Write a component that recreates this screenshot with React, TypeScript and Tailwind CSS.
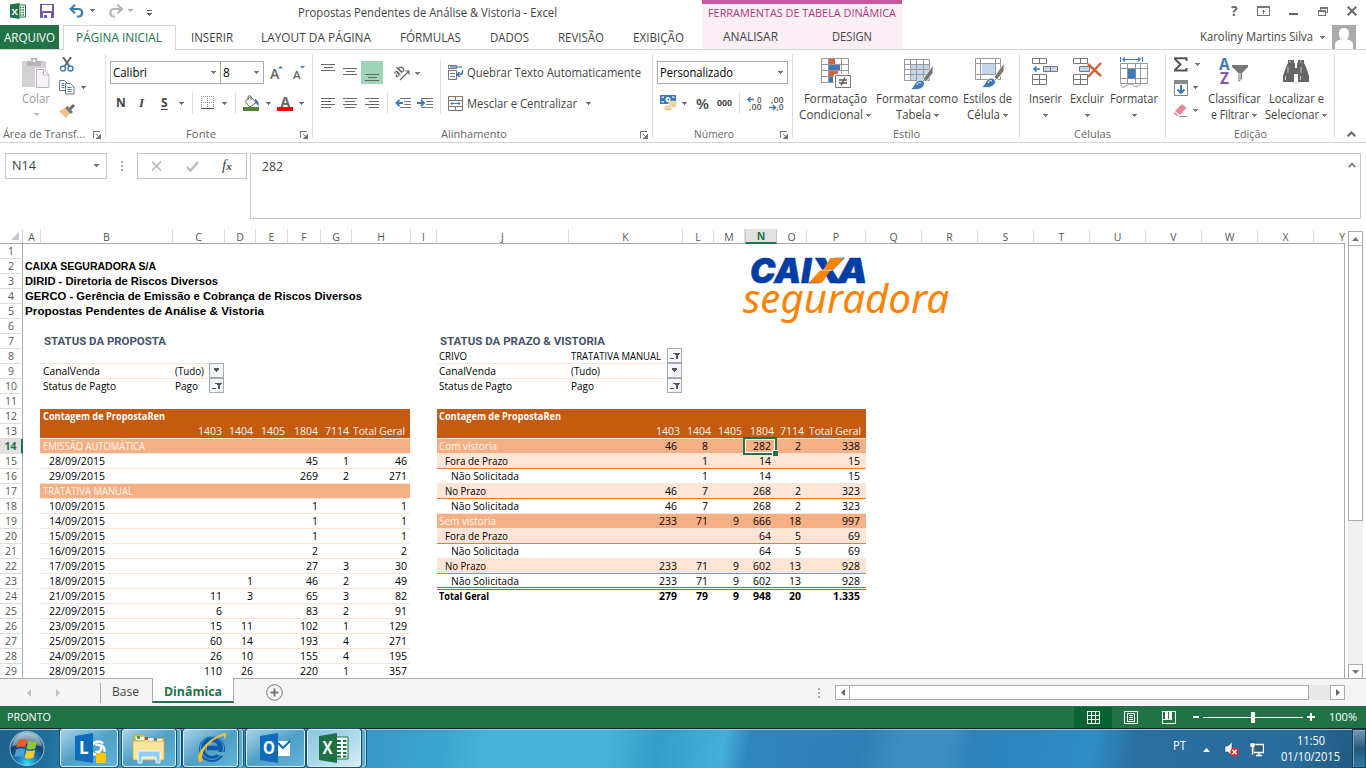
import React, { useLayoutEffect, useRef } from "react";

/* Text squeezed or stretched horizontally to a given width. */
function T({ w, c = "", children }: { w: number; c?: string; children: string }) {
  const ref = useRef<HTMLSpanElement>(null);
  useLayoutEffect(() => {
    const el = ref.current;
    if (!el) return;
    el.style.transform = "none";
    const natural = el.getBoundingClientRect().width;
    if (natural > 0) el.style.transform = `scaleX(${w / natural})`;
  }, [w, children]);
  return (
    <span className={`inline-flex shrink-0 whitespace-nowrap ${c}`} style={{ width: w }}>
      <span ref={ref} className="inline-block origin-left">
        {children}
      </span>
    </span>
  );
}

function Arrow({ c = "" }: { c?: string }) {
  return (
    <svg viewBox="0 0 5 3" className={`h-[3px] w-[5px] shrink-0 ${c}`} shapeRendering="crispEdges">
      <path d="M0 0h5v1h-1v1h-1v1h-1v-1h-1v-1h-1z" fill="#777" />
    </svg>
  );
}

function Launcher() {
  return (
    <svg viewBox="0 0 8 8" className="mr-[4px] mt-[1px] ml-auto h-[8px] w-[8px]" shapeRendering="crispEdges" fill="none" stroke="#777">
      <path d="M.5 7V.5H7" />
      <path d="M7.5 3v4.5H3" />
      <path d="M3 3h1v1H3zM4 4h1v1H4zM4 6h3v1H4zM6 4h1v3H6zM5 5h1v1H5z" fill="#777" stroke="none" />
    </svg>
  );
}

function Lines({ l, w = 14, h = 14, c = "" }: { l: number[][]; w?: number; h?: number; c?: string }) {
  return (
    <svg width={w} height={h} viewBox={`0 0 ${w} ${h}`} className={`shrink-0 ${c}`} shapeRendering="crispEdges">
      {l.map(([x, y, n], i) => (
        <rect key={i} x={x} y={y} width={n} height="1" fill="#666" />
      ))}
    </svg>
  );
}

function Vr({ c = "" }: { c?: string }) {
  return <div className={`w-px shrink-0 self-stretch bg-[#dcdcdc] ${c}`} />;
}

function Group({ c, label, lw, left, launcher, children }: { c: string; label: string; lw: number; left?: string; launcher?: boolean; children: React.ReactNode }) {
  return (
    <div className={`mt-[4px] flex h-[84px] shrink-0 flex-col border-r border-[#dcdcdc] ${c}`}>
      <div className="h-[60px] shrink-0">{children}</div>
      <div className={`mt-[8px] flex h-[24px] shrink-0 items-center text-[11px] text-[#666] ${left ? "" : "justify-center"}`}>
        <T w={lw} c={left ?? ""}>{label}</T>
        {launcher && <Launcher />}
      </div>
    </div>
  );
}

function Big({ c, icon, a, aw, b, bw }: { c: string; icon: React.ReactNode; a: string; aw: number; b?: string; bw?: number }) {
  return (
    <div className={`flex shrink-0 flex-col items-center pt-[3px] ${c}`}>
      <div className="flex h-[32px] items-start">{icon}</div>
      <div className="mt-[2px] flex h-[16px] items-center"><T w={aw}>{a}</T></div>
      <div className="flex h-[16px] items-center gap-[3px]">
        {b && <T w={bw ?? 0}>{b}</T>}
        <Arrow />
      </div>
    </div>
  );
}

function ExcelMini() {
  return (
    <svg viewBox="0 0 16 16" className="h-[16px] w-[16px]">
      <path d="M8 2h7.5v12H8z" fill="#fff" stroke="#217346" />
      <path d="M10 4.5h1.5M12.5 4.5H14M10 7h1.5M12.5 7H14M10 9.500h1.500M12.500 9.500H14M10 12h1.500M12.500 12H14" stroke="#217346" strokeWidth="1.300" />
      <path d="M0 1.500L9.500 0v16L0 14.500z" fill="#217346" />
      <text x="1.600" y="11.500" fontSize="9.500" fontWeight="700" fill="#fff" fontFamily="Open Sans, sans-serif">X</text>
    </svg>
  );
}

function Header() {
  const tab = "text-[12px]";
  return (
    <div className="flex h-[50px] shrink-0">
      <div className="flex w-[702px] flex-col">
        <div className="flex h-[25px] items-center">
          <div className="ml-[10px] -mt-[4px]"><ExcelMini /></div>
          <svg viewBox="0 0 14 14" className="ml-[14px] -mt-[3px] h-[14px] w-[14px]" shapeRendering="crispEdges">
            <path d="M0 0h14v14H0z" fill="#7c54a5" />
            <path d="M2 1h10v6H2zM3 9h8v5H3z" fill="#fff" />
            <path d="M4 11h3v3H4z" fill="#7c54a5" />
          </svg>
          <svg viewBox="0 0 16 14" className="-mt-[4px] ml-[15px] h-[14px] w-[16px]" fill="none" stroke="#3f7ab8" strokeWidth="2.200">
            <path d="M1.500 5H10a3.800 3.800 0 0 1 0 7.500H8" /><path d="M6 .8L1.500 5 6 9.200" />
          </svg>
          <Arrow c="ml-[5px] -mt-[4px]" />
          <svg viewBox="0 0 16 14" className="-mt-[4px] ml-[13px] h-[14px] w-[16px]" fill="none" stroke="#b5b5b5" strokeWidth="2.200">
            <path d="M14 5H5.500a3.800 3.800 0 0 0 0 7.500H7" /><path d="M9.500 .8L14 5 9.500 9.200" />
          </svg>
          <Arrow c="ml-[4px] -mt-[4px] opacity-60" />
          <svg viewBox="0 0 6 6" className="ml-[14px] h-[6px] w-[6px]" shapeRendering="crispEdges">
            <path d="M0 0h5v1H0zM0 3h5v1h-1v1h-1v1h-1v-1h-1v-1h-1z" fill="#666" />
          </svg>
          <T w={259} c="ml-[145px] mt-[1px] text-[12px] text-[#444]">Propostas Pendentes de Análise & Vistoria - Excel</T>
        </div>
        <div className={`flex h-[25px] items-stretch ${tab}`}>
          <div className="flex w-[59px] items-center border-b border-[#d4d4d4] bg-[#217346] pl-[4px] pt-[1px] text-white"><T w={51}>ARQUIVO</T></div>
          <div className="w-[4px] border-b border-[#d4d4d4]" />
          <div className="flex w-[113px] items-center border-x border-t border-[#d4d4d4] pl-[12px] text-[#217346]"><T w={86}>PÁGINA INICIAL</T></div>
          <div className="flex flex-1 items-center border-b border-[#d4d4d4] pt-[2px] text-[#444]">
            <T w={42} c="ml-[15px]">INSERIR</T>
            <T w={110} c="ml-[28px]">LAYOUT DA PÁGINA</T>
            <T w={61} c="ml-[29px]">FÓRMULAS</T>
            <T w={39} c="ml-[29px]">DADOS</T>
            <T w={46} c="ml-[29px]">REVISÃO</T>
            <T w={51} c="ml-[29px]">EXIBIÇÃO</T>
          </div>
        </div>
      </div>
      <div className="flex w-[200px] flex-col border-b border-t-4 border-b-[#d4d4d4] border-t-[#c9589d] bg-[#fbeff6]">
        <div className="flex h-[18px] items-center pl-[6px] text-[11.500px] text-[#a8397c]"><T w={188}>FERRAMENTAS DE TABELA DINÂMICA</T></div>
        <div className="mt-[4px] flex h-[24px] items-center text-[12px] text-[#444]">
          <T w={55} c="ml-[21px]">ANALISAR</T>
          <T w={40} c="ml-[54px]">DESIGN</T>
        </div>
      </div>
      <div className="flex flex-1 flex-col border-b border-[#d4d4d4]">
        <div className="flex h-[25px] items-center text-[#666]">
          <span className="-mt-[3px] ml-[329px] w-[8px] text-[14px] font-bold leading-none">?</span>
          <svg viewBox="0 0 13 10" className="-mt-[3px] ml-[18px] h-[10px] w-[13px]" shapeRendering="crispEdges" fill="none" stroke="#777">
            <path d="M.5.500h12v9H.5zM0 1.500h13M6.500 4v4M5 5.500h3M6 4.500h1" />
          </svg>
          <div className="ml-[19px] mt-[2px] h-[2px] w-[9px] bg-[#666]" />
          <svg viewBox="0 0 10 9" className="-mt-[3px] ml-[20px] h-[9px] w-[10px]" shapeRendering="crispEdges" fill="none" stroke="#777">
            <path d="M2.500 2.500v-2h7v5h-2M.5 3.500h7v5h-7zM2 1.500h8M0 4.500h8" />
          </svg>
          <svg viewBox="0 0 10 10" className="-mt-[3px] ml-[19px] h-[10px] w-[10px]" stroke="#666" strokeWidth="2"><path d="M.7.700l8.600 8.600M9.300.700L.7 9.300" /></svg>
        </div>
        <div className="flex h-[24px] items-center text-[12px] text-[#444]">
          <T w={113} c="ml-[298px]">Karoliny Martins Silva</T>
          <Arrow c="ml-[7px]" />
          <svg viewBox="0 0 24 24" className="ml-[7px] h-[24px] w-[24px]">
            <path d="M0 0h24v24H0z" fill="#ababab" />
            <path d="M3 24v-4c0-4 3-5 6-5.500C7 12.500 7 10 7 8c0-3 2-5 5-5s5 2 5 5c0 2-.5 4.500-2 6.500 3 .5 6 1.500 6 5.500v4z" fill="#fff" />
          </svg>
        </div>
      </div>
    </div>
  );
}

const Brush = ({ x = 0 }: { x?: number }) => (
  <g transform={`translate(${x} 0)`}>
    <path d="M29 6L19 20l3 3 7-9z" fill="#777" stroke="#fff" strokeWidth=".8" />
    <path d="M6 30c4 0 4-8 10-9 4 0 6 4 3 7-3 3-9 3-13 2z" fill="#3f7ab8" stroke="#fff" strokeWidth=".8" />
    <path d="M13 26a3 3 0 0 1 4-2" stroke="#fff" fill="none" />
  </g>
);

function Ribbon() {
  return (
    <div className="flex h-[93px] shrink-0 border-b border-[#d4d4d4] text-[12px] text-[#444]">
      <Group c="w-[106px]" label="Área de Transf..." lw={82} left="ml-[3px]" launcher>
        <div className="flex">
          <div className="flex w-[57px] flex-col items-center pl-[15px] pt-[4px] text-[#999]">
            <svg viewBox="0 0 28 30" className="h-[30px] w-[28px]">
              <path d="M0 3h24v26H0z" fill="#d5d0d5" />
              <path d="M5 8V3h4V0h6v3h4v5z" fill="#b9b4ba" /><path d="M11 1.500h2V4h-2z" fill="#fff" />
              <path d="M13 10h9l6 6v14H13z" fill="#fff" />
              <path d="M14.500 11.500h7l5.500 5.500v12.500H14.500zM21.500 11.500V17H27" fill="#f6f4f8" stroke="#b9b4ba" />
            </svg>
            <div className="mt-[3px] flex h-[16px] items-center"><T w={28}>Colar</T></div>
            <Arrow c="mt-[6px] opacity-50" />
          </div>
          <div className="-mt-px flex flex-col pl-[2px]">
            <div className="flex h-[23px] items-center">
              <svg viewBox="0 0 16 15" className="h-[15px] w-[16px]" fill="none">
                <path d="M4 0l6.500 9.500M12 0L5.500 9.500" stroke="#666" strokeWidth="2" />
                <circle cx="4" cy="11.500" r="2.500" stroke="#3f7ab8" strokeWidth="1.400" /><circle cx="11.500" cy="11.500" r="2.500" stroke="#3f7ab8" strokeWidth="1.400" />
              </svg>
            </div>
            <div className="flex h-[23px] items-center">
              <svg viewBox="0 0 16 15" className="h-[15px] w-[16px]" fill="#fff" stroke="#777">
                <path d="M.5.500h5l3 3V10.500H.5z" /><path d="M2.500 3.500h3M2.500 5.500h3M2.500 7.500h3" stroke="#3f7ab8" />
                <path d="M6.500 3.500h5l3.500 3.500V14H6.500z" /><path d="M8.500 7.500h4M8.500 9.500h4M8.500 11.500h4" stroke="#3f7ab8" />
              </svg>
              <Arrow c="ml-[6px]" />
            </div>
            <div className="flex h-[23px] items-center">
              <svg viewBox="0 0 16 14" className="h-[14px] w-[16px]">
                <path d="M0 7l6-3 5 5-4 5z" fill="#eec587" /><path d="M6 4l2.500-2L14 8l-2.500 2z" fill="#777" /><path d="M10 4l4-4 2 2-4 4z" fill="#666" />
              </svg>
            </div>
          </div>
        </div>
      </Group>

      <Group c="w-[207px]" label="Fonte" lw={30} launcher left="ml-[80px]">
        <div className="flex h-[38px] items-center">
          <div className="-mt-[1px] ml-[4px] flex h-[23px] w-[111px] items-center justify-between border border-[#ababab] pl-[2px] pr-[4px] text-black"><T w={34}>Calibri</T><Arrow /></div>
          <div className="-mt-[1px] -ml-px flex h-[23px] w-[44px] items-center justify-between border border-[#ababab] pl-[2px] pr-[4px] text-black"><span>8</span><Arrow /></div>
          <svg viewBox="0 0 14 16" className="ml-[6px] h-[16px] w-[14px] overflow-visible">
            <text x="0" y="13.500" fontSize="14" fontWeight="600" fill="#666" fontFamily="Open Sans, sans-serif" textLength="9.500">A</text>
            <path d="M8 3.500L10.500 1 13 3.500z" fill="#3f7ab8" />
          </svg>
          <svg viewBox="0 0 14 16" className="ml-[9px] h-[16px] w-[14px] overflow-visible">
            <text x="0" y="13.500" fontSize="11.500" fontWeight="600" fill="#666" fontFamily="Open Sans, sans-serif" textLength="7.500">A</text>
            <path d="M7 1h5L9.500 3.500z" fill="#3f7ab8" />
          </svg>
        </div>
        <div className="flex h-[22px] items-center">
          <span className="ml-[10px] w-[9px] font-bold">N</span>
          <span className="ml-[14px] w-[6px] font-[Liberation_Serif] text-[13px] font-bold italic">I</span>
          <span className="ml-[16px] w-[8px] font-bold underline underline-offset-2">S</span>
          <Arrow c="ml-[10px]" /><Vr c="ml-[8px]" />
          <svg viewBox="0 0 13 14" className="ml-[8px] h-[14px] w-[13px]" shapeRendering="crispEdges">
            <path d="M0 .5h13M0 6.500h13M.5 0v13M6.500 0v13M12.500 0v13" stroke="#888" strokeDasharray="1 1" /><path d="M0 12h13v1H0z" fill="#555" />
          </svg>
          <Arrow c="ml-[8px]" /><Vr c="ml-[8px]" />
          <svg viewBox="0 0 16 16" className="ml-[7px] h-[16px] w-[16px]">
            <path d="M7.500 1.500l5.500 6-6 4.500-5-5.500z" fill="#fff" stroke="#666" /><path d="M5 5V1.500Q6.500-.5 8 1.500V5" fill="none" stroke="#666" />
            <path d="M12 4c3 1 4 4 3.500 7.500C14 9 13 8 12 8z" fill="#3f7ab8" /><path d="M0 12h16v4H0z" fill="#548235" />
          </svg>
          <Arrow c="ml-[7px]" />
          <svg viewBox="0 0 16 16" className="ml-[6px] h-[16px] w-[16px] overflow-visible">
            <text x="3.500" y="11.500" fontSize="14" fontWeight="700" fill="#666" fontFamily="Open Sans, sans-serif">A</text><path d="M0 12h16v4H0z" fill="#f00" />
          </svg>
          <Arrow c="ml-[6px]" />
        </div>
      </Group>

      <Group c="w-[340px]" label="Alinhamento" lw={66} launcher left="ml-[128px]">
        <div className="flex">
          <div className="w-[127px]">
            <div className="flex h-[38px] items-center">
              <Lines c="ml-[8px]" h={20} l={[[0, 1, 14], [3, 4, 9], [0, 7, 14]]} />
              <Lines c="ml-[8px]" h={20} l={[[0, 5, 14], [3, 8, 9], [0, 11, 14]]} />
              <div className="-mt-[1px] ml-[4px] flex h-[23px] w-[22px] items-center justify-center bg-[#9fd5b7]"><Lines h={20} l={[[0, 11, 14], [3, 14, 9], [0, 17, 14]]} /></div>
              <svg viewBox="0 0 17 16" className="ml-[11px] h-[16px] w-[17px] overflow-visible">
                <text transform="translate(3.500 9.500) rotate(-45)" x="-3" y="2" fontSize="10.500" fontWeight="600" fill="#555" fontFamily="Open Sans, sans-serif">ab</text>
                <path d="M6 15l8.500-8.500M11.500 6H15v3.500" fill="none" stroke="#666" strokeWidth="1.200" />
              </svg>
              <Arrow c="ml-[4px]" />
            </div>
            <div className="flex h-[22px] items-center">
              <Lines c="ml-[8px]" h={12} l={[[0, 1, 14], [0, 4, 10], [0, 7, 14], [0, 10, 10]]} />
              <Lines c="ml-[8px]" h={12} l={[[0, 1, 14], [2, 4, 10], [0, 7, 14], [2, 10, 10]]} />
              <Lines c="ml-[8px]" h={12} l={[[0, 1, 14], [4, 4, 10], [0, 7, 14], [4, 10, 10]]} />
              <Vr c="ml-[8px]" />
              <svg viewBox="0 0 17 12" className="ml-[7px] h-[12px] w-[17px]">
                <path d="M5 1.500h11M9 4.500h7M9 7.500h7M5 10.500h11" stroke="#777" /><path d="M8 6H2M4.500 3L1.500 6l3 3" fill="none" stroke="#3f7ab8" strokeWidth="1.800" />
              </svg>
              <svg viewBox="0 0 17 12" className="ml-[5px] h-[12px] w-[17px]">
                <path d="M4 1.500h12M9 4.500h7M9 7.500h7M4 10.500h12" stroke="#777" /><path d="M0 6h6M4 3l3 3-3 3" fill="none" stroke="#3f7ab8" strokeWidth="1.800" />
              </svg>
            </div>
          </div>
          <Vr c="mt-[6px]" />
          <div>
            <div className="flex h-[38px] items-center">
              <svg viewBox="0 0 16 15" className="-mt-[2px] ml-[7px] h-[15px] w-[16px]" fill="none">
                <path d="M.5.500h8v3h-8zM.5 5.500h8v9h-8zM2 8.500h5M2 11.500h5" stroke="#777" />
                <path d="M2 2h12" stroke="#3f7ab8" strokeWidth="1.200" /><path d="M14.500 5v2q0 2.500-3 2.500H9M11.500 7L9 9.500l2.500 2.500" stroke="#3f7ab8" strokeWidth="1.500" />
              </svg>
              <T w={174} c="ml-[3px]">Quebrar Texto Automaticamente</T>
            </div>
            <div className="flex h-[22px] items-center">
              <svg viewBox="0 0 16 15" className="ml-[7px] h-[15px] w-[16px]" fill="none">
                <path d="M.5.500h14v14H.5zM0 4.500h15M0 10.500h15M7.500 0v4M7.500 11v4" stroke="#777" /><path d="M3 7.500h9M4.500 6L3 7.500 4.500 9M10.500 6L12 7.500 10.500 9" stroke="#3f7ab8" />
              </svg>
              <T w={110} c="ml-[3px] mt-[1px]">Mesclar e Centralizar</T>
              <Arrow c="ml-[9px]" />
            </div>
          </div>
        </div>
      </Group>

      <Group c="w-[140px]" label="Número" lw={40} launcher left="ml-[41px]">
        <div className="flex h-[38px] items-center">
          <div className="-mt-[1px] ml-[4px] flex h-[23px] w-[131px] items-center justify-between border border-[#ababab] pl-[2px] pr-[4px] text-black"><T w={73}>Personalizado</T><Arrow /></div>
        </div>
        <div className="flex h-[22px] items-center">
          <svg viewBox="0 0 17 16" className="ml-[7px] h-[16px] w-[17px]">
            <path d="M0 0h16v9H0z" fill="#3f7ab8" /><path d="M2 3V2h2M12 2h2v1M2 6v1h2" stroke="#fff" fill="none" /><circle cx="8" cy="4.500" r="2.500" fill="#fff" /><circle cx="8.500" cy="4.500" r="1" fill="#3f7ab8" />
            <ellipse cx="12.500" cy="8" rx="4" ry="2" fill="#eec587" stroke="#fff" strokeWidth=".6" /><ellipse cx="12.500" cy="10.500" rx="4" ry="2" fill="#eec587" stroke="#fff" strokeWidth=".6" />
            <ellipse cx="8" cy="12" rx="4" ry="2" fill="#eec587" stroke="#fff" strokeWidth=".6" /><ellipse cx="8" cy="14" rx="4" ry="1.800" fill="#eec587" stroke="#fff" strokeWidth=".6" />
          </svg>
          <Arrow c="ml-[5px]" />
          <T w={13} c="ml-[9px] text-[14px] font-semibold">%</T>
          <T w={15} c="ml-[8px] mt-[-1px] text-[9px] font-bold">000</T>
          <Vr c="ml-[7px]" />
          <svg viewBox="0 0 16 15" className="ml-[7px] h-[15px] w-[16px] overflow-visible" fontFamily="Open Sans, sans-serif" fontSize="9" fontWeight="600" fill="#555">
            <path d="M7 3.500H1M3.500 1L1 3.500 3.500 6" stroke="#3f7ab8" strokeWidth="1.500" fill="none" />
            <text x="10" y="6.500" textLength="4.500" lengthAdjust="spacingAndGlyphs">0</text><text x="2" y="14" textLength="12.500" lengthAdjust="spacingAndGlyphs">,00</text>
          </svg>
          <svg viewBox="0 0 16 15" className="ml-[6px] h-[15px] w-[16px] overflow-visible" fontFamily="Open Sans, sans-serif" fontSize="9" fontWeight="600" fill="#555">
            <text x="2" y="6.500" textLength="12.500" lengthAdjust="spacingAndGlyphs">,00</text><text x="7.500" y="14" textLength="7" lengthAdjust="spacingAndGlyphs">,0</text>
            <path d="M0 11.500h6M4 9l2.500 2.500L4 14" stroke="#3f7ab8" strokeWidth="1.500" fill="none" />
          </svg>
        </div>
      </Group>

      <Group c="w-[227px]" label="Estilo" lw={27}>
        <div className="flex">
          <Big c="w-[84px]" a="Formatação" aw={63} b="Condicional" bw={64} icon={
            <svg viewBox="0 0 30 31" className="ml-[2px] mt-[1px] h-[31px] w-[30px]">
              <path d="M.5.500h27v24H.5zM0 6.500h28M0 12.500h28M0 18.500h28M7.500 0v25M20.500 0v25" fill="#fff" stroke="#999" />
              <path d="M8 1h6v5H8zM8 13h9v5H8z" fill="#d9603c" /><path d="M8 7h11v5H8zM8 19h4v5H8z" fill="#3f7ab8" />
              <path d="M13 16h17v15H13z" fill="#fff" /><path d="M14.500 17.500h15v12h-15z" fill="#fff" stroke="#777" />
              <path d="M18 22h8M18 25h8M24 19.500l-4 8" stroke="#555" strokeWidth="1.300" />
            </svg>} />
          <Big c="w-[80px]" a="Formatar como" aw={82} b="Tabela" bw={35} icon={
            <svg viewBox="0 0 30 32" className="ml-[4px] mt-[2px] h-[32px] w-[30px]">
              <path d="M.5.500h25v21H.5z" fill="#fff" /><path d="M7 6h19v16H7z" fill="#c3d5ea" />
              <path d="M.5.500h25v21H.5zM0 5.500h26M0 10.500h26M0 15.500h26M6.500 0v22M12.500 0v22M19.500 0v22" fill="none" stroke="#999" /><Brush />
            </svg>} />
          <Big c="w-[60px]" a="Estilos de" aw={49} b="Célula" bw={33} icon={
            <svg viewBox="0 0 30 32" className="ml-[5px] h-[32px] w-[30px]">
              <path d="M.5 1.500h25v21H.5z" fill="#fff" /><path d="M7 7h13v10H7z" fill="#c3d5ea" />
              <path d="M.5 1.500h25v21H.5zM0 6.500h26M0 17.500h26M5.500 1v22M20.500 1v22" fill="none" stroke="#999" /><Brush />
            </svg>} />
        </div>
      </Group>

      <Group c="w-[146px]" label="Células" lw={37}>
        <div className="flex">
          <Big c="w-[50px]" a="Inserir" aw={33} icon={
            <svg viewBox="0 0 26 28" className="mt-[1px] h-[28px] w-[26px]" fill="#fff" stroke="#777">
              <path d="M.5.500h14v5H.5zM7.500 0v6M.5 16.500h14v10H.5zM7.500 16v11M0 21.500h15" /><path d="M11.500 8.500h14v5h-14zM18.500 8v6" fill="#c3d5ea" />
              <path d="M8 11H2M4.500 8.500L2 11l2.500 2.500" fill="none" stroke="#3f7ab8" strokeWidth="1.700" />
            </svg>} />
          <Big c="w-[34px]" a="Excluir" aw={34} icon={
            <svg viewBox="0 0 30 28" className="ml-[2px] mt-[1px] h-[28px] w-[30px]" fill="#fff" stroke="#777">
              <path d="M.5.500h14v5H.5zM7.500 0v6M.5 16.500h14v10H.5zM7.500 16v11M0 21.500h15" /><path d="M6.500 8.500h10v5h-10z" fill="#c3d5ea" />
              <path d="M15 6l13 12M28 5L15 19" stroke="#d9603c" strokeWidth="2.500" fill="none" />
            </svg>} />
          <Big c="w-[60px]" a="Formatar" aw={48} icon={
            <svg viewBox="0 0 28 32" className="h-[32px] w-[28px]" fill="none">
              <path d="M.5 6.500h27v20H.5zM0 11.500h28M0 21.500h28M7.500 6v21M15.500 6v21M20.500 6v21" stroke="#999" />
              <path d="M1 27q0 4 3 3l5-3h3q3 3 5 3l4-3" stroke="#999" /><path d="M8 12h7.500v9.500H8z" fill="#3f7ab8" />
              <path d="M.5 0v5M22.500 0v5M3 2.500h17M5 .5L3 2.500l2 2M18 .5l2 2-2 2" stroke="#3f7ab8" strokeWidth="1.200" />
            </svg>} />
        </div>
      </Group>

      <Group c="w-[169px]" label="Edição" lw={33}>
        <div className="flex">
          <div className="-mt-px w-[38px] pl-[7px]">
            <div className="flex h-[23px] items-center">
              <svg viewBox="0 0 15 15" className="h-[15px] w-[15px]"><path d="M1 1.200h12.500V4M1.500 1.500l6 6-6 6M1 13.500h12.500V11" fill="none" stroke="#555" strokeWidth="2" /></svg>
              <Arrow c="ml-[7px]" />
            </div>
            <div className="flex h-[23px] items-center">
              <svg viewBox="0 0 15 16" className="h-[16px] w-[15px]"><path d="M1.500.500h13v15h-13z" fill="#fff" stroke="#888" /><path d="M1 0h14v4H1z" fill="#888" /><path d="M8 5v8M4.500 9.500L8 13l3.500-3.500" stroke="#3f7ab8" strokeWidth="2" fill="none" /></svg>
              <Arrow c="ml-[5px]" />
            </div>
            <div className="flex h-[23px] items-center">
              <svg viewBox="0 0 15 13" className="h-[13px] w-[15px]"><path d="M2 7L9 0l4.500 4L7 11z" fill="#e8879c" /><path d="M1.500 8L6 12H4L.5 9.500z" fill="#e8879c" /><path d="M6 12.500h8" stroke="#888" /></svg>
              <Arrow c="ml-[5px]" />
            </div>
          </div>
          <Big c="w-[60px]" a="Classificar" aw={53} b="e Filtrar" bw={38} icon={
            <svg viewBox="0 0 30 28" className="mt-[1px] h-[28px] w-[30px] overflow-visible" fontFamily="Open Sans, sans-serif" fontWeight="700">
              <text x="0" y="12" fontSize="15.500" fill="#3f7ab8">A</text><text x="1" y="26" fontSize="15.500" fill="#8a55ad">Z</text>
              <path d="M13 7h16v2l-6 6v6l-3.500 3V15L13 9z" fill="#777" /><path d="M21 15v7" stroke="#fff" />
            </svg>} />
          <Big c="w-[64px]" a="Localizar e" aw={55} b="Selecionar" bw={54} icon={
            <svg viewBox="0 0 26 24" className="mt-[2px] h-[24px] w-[26px]">
              <path d="M5 1h6v3h1v5h2V4h1V1h6v3l2 4 3 9v6H15v-8h-4v8H0v-6l3-9 2-4z" fill="#666" />
              <path d="M2.500 17v4M5 8v6M17.500 17v4M18 8v6M7 1.500v2M18 1.500v2" stroke="#ccc" />
            </svg>} />
        </div>
      </Group>
      <div className="flex flex-1 items-end pb-[5px] pl-[12px]">
        <svg viewBox="0 0 9 6" className="h-[6px] w-[9px]" fill="none" stroke="#666" strokeWidth="2"><path d="M.7 5.300l3.800-3.800 3.800 3.800" /></svg>
      </div>
    </div>
  );
}

function FormulaBar() {
  return (
    <div className="flex h-[86px] shrink-0 items-start pl-[5px] pt-[10px] text-[12px] text-[#444]">
      <div className="flex h-[26px] w-[102px] items-center justify-between border border-[#c6c6c6] pl-[6px] pr-[6px]">
        <T w={24}>N14</T>
        <svg viewBox="0 0 8 5" className="mt-[-1px] h-[4px] w-[7px]"><path d="M0 0h8L4 4.500z" fill="#777" /></svg>
      </div>
      <div className="ml-[14px] mt-[8px] flex flex-col gap-[2px]">
        <div className="size-[2px] bg-[#aaa]" /><div className="size-[2px] bg-[#aaa]" /><div className="size-[2px] bg-[#aaa]" />
      </div>
      <div className="ml-[14px] flex h-[26px] w-[110px] items-center border border-[#c6c6c6]">
        <svg viewBox="0 0 11 10" className="ml-[13px] h-[10px] w-[11px]" stroke="#bbb" strokeWidth="1.700"><path d="M1 .5l9 9M10 .5l-9 9" /></svg>
        <svg viewBox="0 0 13 11" className="ml-[24px] h-[11px] w-[13px]" stroke="#bbb" strokeWidth="2.400" fill="none"><path d="M1 6l3.500 3.500L12 1" /></svg>
        <span className="ml-[23px] mt-[-1px] font-[Liberation_Serif] text-[15px] italic leading-none text-[#444]">f<span className="text-[11px] font-bold">x</span></span>
      </div>
      <div className="ml-[3px] flex h-[66px] w-[1111px] items-start justify-between border border-[#c6c6c6] pl-[11px] pr-[4px]">
        <T w={21} c="mt-[4px]">282</T>
        <svg viewBox="0 0 9 6" className="mt-[8px] h-[6px] w-[8px]" fill="none" stroke="#777" strokeWidth="2"><path d="M.7 5.300l3.800-3.800 3.800 3.800" /></svg>
      </div>
    </div>
  );
}

const COLS: [string, number][] = [
  ["A", 17], ["B", 133], ["C", 52], ["D", 31], ["E", 32], ["F", 33], ["G", 31], ["H", 59], ["I", 26], ["J", 132], ["K", 114],
  ["L", 31], ["M", 31], ["N", 32], ["O", 30], ["P", 59], ["Q", 56], ["R", 56], ["S", 56], ["T", 56], ["U", 56], ["V", 56], ["W", 56], ["X", 56],
];

const LW = [133, 52, 31, 32, 33, 31, 58];
const RW = [132, 114, 31, 31, 32, 30, 59];

type Row = { k?: string; t?: string; w?: number; i?: number; v?: (string | number)[] };
const HDR = ["1403", "1404", "1405", "1804", "7114", "Total Geral"];
const d = (t: string, ...v: (string | number)[]): Row => ({ k: "line", t, w: 56, i: 6, v });

const LEFT: Record<number, Row> = {
  12: { k: "dark", t: "Contagem de PropostaRen", w: 122 },
  13: { k: "darkline", v: HDR },
  14: { k: "band", t: "EMISSÃO AUTOMÁTICA", w: 102 },
  15: d("28/09/2015", "", "", "", 45, 1, 46),
  16: d("29/09/2015", "", "", "", 269, 2, 271),
  17: { k: "band", t: "TRATATIVA MANUAL", w: 90 },
  18: d("10/09/2015", "", "", "", 1, "", 1),
  19: d("14/09/2015", "", "", "", 1, "", 1),
  20: d("15/09/2015", "", "", "", 1, "", 1),
  21: d("16/09/2015", "", "", "", 2, "", 2),
  22: d("17/09/2015", "", "", "", 27, 3, 30),
  23: d("18/09/2015", "", 1, "", 46, 2, 49),
  24: d("21/09/2015", 11, 3, "", 65, 3, 82),
  25: d("22/09/2015", 6, "", "", 83, 2, 91),
  26: d("23/09/2015", 15, 11, "", 102, 1, 129),
  27: d("25/09/2015", 60, 14, "", 193, 4, 271),
  28: d("24/09/2015", 26, 10, "", 155, 4, 195),
  29: d("28/09/2015", 110, 26, "", 220, 1, 357),
};

const RIGHT: Record<number, Row> = {
  12: { k: "dark", t: "Contagem de PropostaRen", w: 122 },
  13: { k: "darkline", v: HDR },
  14: { k: "band", t: "Com vistoria", w: 58, v: [46, 8, "", 282, 2, 338] },
  15: { k: "soft", t: "Fora de Prazo", w: 63, i: 6, v: ["", 1, "", 14, "", 15] },
  16: { k: "line", t: "Não Solicitada", w: 68, i: 12, v: ["", 1, "", 14, "", 15] },
  17: { k: "soft", t: "No Prazo", w: 41, i: 6, v: [46, 7, "", 268, 2, 323] },
  18: { k: "line", t: "Não Solicitada", w: 68, i: 12, v: [46, 7, "", 268, 2, 323] },
  19: { k: "band", t: "Sem vistoria", w: 57, v: [233, 71, 9, 666, 18, 997] },
  20: { k: "soft", t: "Fora de Prazo", w: 63, i: 6, v: ["", "", "", 64, 5, 69] },
  21: { k: "line", t: "Não Solicitada", w: 68, i: 12, v: ["", "", "", 64, 5, 69] },
  22: { k: "soft", t: "No Prazo", w: 41, i: 6, v: [233, 71, 9, 602, 13, 928] },
  23: { k: "dbl", t: "Não Solicitada", w: 68, i: 12, v: [233, 71, 9, 602, 13, 928] },
  24: { k: "tot", t: "Total Geral", w: 50, v: [279, 79, 9, 948, 20, "1.335"] },
};

const KIND: Record<string, string> = {
  dark: "h-[15px] bg-[#c55a11] font-bold text-white",
  darkline: "h-[15px] bg-[#c55a11] border-b border-[#fce4d6] text-[#fff3ea]",
  band: "h-[15px] bg-[#f4b084] border-b border-[#fce4d6]",
  soft: "h-[15px] bg-[#fce4d6] border-b border-[#ed7d31]",
  line: "h-[15px] border-b border-[#fce4d6]",
  dbl: "h-[16px] border-b-[3px] border-double border-[#c55a11]",
  tot: "h-[15px] font-bold",
};

function PivotRow({ r, ws, right }: { r?: Row; ws: number[]; right?: boolean }) {
  const total = ws.reduce((a, b) => a + b, 0);
  if (!r) return <div className="h-[15px] shrink-0" style={{ width: total }} />;
  return (
    <div className={`flex shrink-0 items-start leading-[15px] ${KIND[r.k ?? "line"]}`} style={{ width: total }}>
      <div className="shrink-0" style={{ width: ws[0], paddingLeft: (right ? 2 : 3) + (r.i ?? 0) }}>
        {r.t && <T w={r.w ?? 50} c={r.k === "band" ? "text-[#fff6ef]" : ""}>{r.t}</T>}
      </div>
      {(r.v ?? []).map((v, i) => (
        <div key={i} className={`flex shrink-0 justify-end ${r.k === "darkline" ? (i === 5 ? "pr-[5px]" : "pr-[3px]") : right ? "pr-[6px]" : "pr-[3px]"}`} style={{ width: ws[i + 1] }}>
          {v === "" ? null : v === "Total Geral" ? <T w={52}>{v}</T> : <T w={String(v).length * 6 - (v === "1.335" ? 3 : 0)}>{String(v)}</T>}
        </div>
      ))}
    </div>
  );
}

function FilterBtn({ f }: { f?: boolean }) {
  return (
    <div className="-mt-[1px] flex h-[15px] w-[15px] shrink-0 items-center justify-center border border-[#a3abb5] bg-[#f4f6f9]">
      {f ? (
        <svg viewBox="0 0 10 8" className="h-[8px] w-[10px]" shapeRendering="crispEdges"><path d="M3 1h7v1H9v1H8v4H6V3H5V2H3zM0 6h4v1H0z" fill="#555" /></svg>
      ) : (
        <svg viewBox="0 0 7 5" className="h-[5px] w-[7px]" shapeRendering="crispEdges"><path d="M1 0h5v2h-1v1h-1v1h-1v-1h-1v-1h-1z" fill="#555" /></svg>
      )}
    </div>
  );
}

const TITLES = ["", "", "CAIXA SEGURADORA S/A", "DIRID - Diretoria de Riscos Diversos", "GERCO - Gerência de Emissão e Cobrança de Riscos Diversos", "Propostas Pendentes de Análise & Vistoria"];
const TITLE_W = [0, 0, 131, 193, 337, 239];

function Filter({ right, label, lw, val, vw, f }: { right?: boolean; label: string; lw: number; val: string; vw: number; f?: boolean }) {
  return (
    <>
      <div className={`flex shrink-0 ${right ? "w-[132px] pl-[2px]" : "w-[133px] pl-[3px]"}`}><T w={lw}>{label}</T></div>
      <div className={`flex shrink-0 justify-between pl-[2px] ${right ? "w-[113px]" : "w-[51px]"}`}><T w={vw}>{val}</T><FilterBtn f={f} /></div>
    </>
  );
}

function SheetRow({ n }: { n: number }) {
  if (n >= 2 && n <= 5)
    return <div className="flex h-[15px] pl-[2px] font-[Liberation_Sans] text-[11px] font-bold leading-[15px]"><T w={TITLE_W[n]}>{TITLES[n]}</T></div>;
  if (n === 7)
    return (
      <div className="flex h-[15px] pl-[21px] font-[Roboto] text-[11.500px] font-bold leading-[15px] text-[#44546a]">
        <T w={122}>STATUS DA PROPOSTA</T>
        <T w={165} c="ml-[274px]">STATUS DA PRAZO & VISTORIA</T>
      </div>
    );
  if (n >= 8 && n <= 10)
    return (
      <div className="flex h-[15px] pl-[17px] leading-[15px]">
        <div className={`flex h-[15px] w-[185px] ${n < 10 ? "border-b border-[#fce4d6]" : ""}`}>
          {n === 9 && <Filter label="CanalVenda" lw={57} val="(Tudo)" vw={29} />}
          {n === 10 && <Filter label="Status de Pagto" lw={73} val="Pago" vw={23} f />}
        </div>
        <div className={`ml-[212px] flex h-[15px] w-[246px] ${n < 10 ? "border-b border-[#fce4d6]" : ""}`}>
          {n === 8 && <Filter right label="CRIVO" lw={28} val="TRATATIVA MANUAL" vw={90} f />}
          {n === 9 && <Filter right label="CanalVenda" lw={57} val="(Tudo)" vw={29} />}
          {n === 10 && <Filter right label="Status de Pagto" lw={73} val="Pago" vw={23} f />}
        </div>
      </div>
    );
  if (n >= 12)
    return (
      <div className="flex h-[15px] pl-[17px]">
        <PivotRow r={LEFT[n]} ws={LW} />
        <div className="w-[27px] shrink-0" />
        <PivotRow r={RIGHT[n]} ws={RW} right />
      </div>
    );
  return <div className="h-[15px]" />;
}

function Sheet() {
  const rows = Array.from({ length: 29 }, (_, i) => i + 1);
  return (
    <div className="flex h-[449px] shrink-0">
      <div className="flex w-[1345px] flex-col overflow-hidden">
        <div className="flex h-[15px] shrink-0 border-b border-[#ababab] text-[10.500px] text-[#555]">
          <div className="flex w-[23px] shrink-0 items-end justify-end border-r border-[#d5d5d5] pb-[3px] pr-[3px]">
            <svg viewBox="0 0 8 8" className="h-[8px] w-[8px]"><path d="M8 0v8H0z" fill="#c8c8c8" /></svg>
          </div>
          {COLS.map(([c, w]) => (
            <div key={c} className={`flex shrink-0 items-center justify-center leading-none ${c === "N" ? "h-[15px] border-x border-b-2 border-x-[#c8c8c8] border-b-[#217346] bg-[#e1e1e1] pt-[2px] font-bold text-[#217346]" : "border-r border-[#dcdcdc] pt-[2px]"}`} style={{ width: c === "A" ? w + 1 : c === "B" ? w - 1 : w }}>{c}</div>
          ))}
          <div className="flex flex-1 items-center justify-end pt-[2px] leading-none">Y</div>
        </div>
        <div className="relative flex h-[434px] shrink-0 overflow-hidden border-r border-[#ababab] text-[10.500px]">
          <div className="w-[23px] shrink-0 text-[#555]">
            {rows.map((n) => (
              <div key={n} className={`flex h-[15px] items-center justify-center border-b border-b-[#dcdcdc] leading-none ${n === 14 ? "border-r-2 border-r-[#217346] bg-[#e1e1e1] font-bold text-[#217346]" : "border-r border-r-[#ababab]"}`}>
                <span className="mt-[1px]">{n}</span>
              </div>
            ))}
          </div>
          <div className="flex-1 text-black">
            {rows.map((n) => <SheetRow key={n} n={n} />)}
          </div>
          {/* active cell frame */}
          <div className="absolute left-[743px] top-[193px] h-[18px] w-[34px] border-2 border-[#217346]"><div className="h-full w-full border border-white" /></div>
          <div className="absolute left-[772px] top-[206px] size-[6px] border-l border-t border-white bg-[#217346]" />
          {/* floating logo */}
          <svg viewBox="0 0 212 72" className="absolute left-[740px] top-[10px] h-[72px] w-[212px]">
            <g fontFamily="Inter, sans-serif" fontWeight="900" fontStyle="italic" fontSize="33.500" fill="#003da5" stroke="#003da5" strokeWidth=".6">
              <text x="10" y="28.500" textLength="61" lengthAdjust="spacingAndGlyphs">CAI</text>
              <text x="70" y="28.500" textLength="33" lengthAdjust="spacingAndGlyphs">X</text>
              <text x="97.500" y="28.500" textLength="30" lengthAdjust="spacingAndGlyphs">A</text>
            </g>
            <path d="M90.300 4h13.500L93 16H83z" fill="#ff8200" />
            <path d="M69 28.800h13L90.500 16.500H80z" fill="#ff8200" />
            <path d="M81 16.300h11" stroke="#fff" strokeWidth=".8" />
            <text x="3" y="58.500" fontFamily="Noto Sans, sans-serif" fontStyle="italic" fontSize="40" fill="#ff8200" textLength="206" lengthAdjust="spacingAndGlyphs">seguradora</text>
          </svg>
        </div>
      </div>
      <div className="flex flex-col pl-[3px] pt-[2px]">
        <div className="flex h-[15px] w-[15px] items-center justify-center border border-[#ababab]"><svg viewBox="0 0 7 4" className="h-[4px] w-[7px]"><path d="M0 4h7L3.500 0z" fill="#777" /></svg></div>
        <div className="-mt-px h-[276px] w-[15px] border border-[#ababab] bg-white" />
        <div className="w-[15px] flex-1 bg-[#f0f0f0]" />
        <div className="mb-[-1px] flex h-[15px] w-[15px] items-center justify-center border border-[#ababab] bg-white"><svg viewBox="0 0 7 4" className="h-[4px] w-[7px]"><path d="M0 0h7L3.500 4z" fill="#777" /></svg></div>
      </div>
    </div>
  );
}

function SheetTabs() {
  return (
    <div className="flex h-[28px] shrink-0 bg-[#f5f5f5]">
      <div className="flex w-[152px] items-center border-t border-[#ababab]">
        <svg viewBox="0 0 4 8" className="ml-[27px] h-[8px] w-[4px]"><path d="M4 0v8L0 4z" fill="#c0c0c0" /></svg>
        <svg viewBox="0 0 4 8" className="ml-[25px] h-[8px] w-[4px]"><path d="M0 0v8l4-4z" fill="#c0c0c0" /></svg>
        <div className="ml-[40px] h-[20px] w-px bg-[#ababab]" />
        <T w={27} c="ml-[11px] mt-[-1px] text-[12.500px] text-[#444]">Base</T>
      </div>
      <div className="flex h-[25px] w-[82px] items-center justify-center border-x border-b-2 border-x-[#ababab] border-b-[#217346] bg-white pt-[5px] text-[12.500px] font-bold text-[#217346]"><T w={58}>Dinâmica</T></div>
      <div className="flex flex-1 items-center border-t border-[#ababab]">
        <svg viewBox="0 0 17 17" className="ml-[32px] h-[17px] w-[17px]" fill="none" stroke="#777"><circle cx="8.500" cy="8.500" r="7.800" /><path d="M8.500 4.500v8M4.500 8.500h8" strokeWidth="2" /></svg>
        <div className="ml-auto flex flex-col gap-[2px]"><div className="size-[2px] bg-[#aaa]" /><div className="size-[2px] bg-[#aaa]" /><div className="size-[2px] bg-[#aaa]" /></div>
        <div className="ml-[15px] flex h-[15px] w-[510px] bg-[#e8e8e8]">
          <div className="flex w-[15px] items-center justify-center border border-[#ababab] bg-white"><svg viewBox="0 0 4 7" className="h-[7px] w-[4px]"><path d="M4 0v7L0 3.500z" fill="#666" /></svg></div>
          <div className="-ml-px w-[460px] border border-[#ababab] bg-white" />
          <div className="ml-auto flex w-[15px] items-center justify-center border border-[#ababab] bg-white"><svg viewBox="0 0 4 7" className="h-[7px] w-[4px]"><path d="M0 0v7l4-3.500z" fill="#666" /></svg></div>
        </div>
        <div className="w-[21px]" />
      </div>
    </div>
  );
}

function StatusBar() {
  return (
    <div className="flex h-[22px] shrink-0 items-center bg-[#217346] text-[11.500px] text-white">
      <T w={44} c="ml-[7px]">PRONTO</T>
      <div className="ml-auto flex h-[21px] w-[38px] items-center justify-center self-end bg-[#0a6332]">
        <svg viewBox="0 0 13 13" className="h-[13px] w-[13px]" shapeRendering="crispEdges" stroke="#fff" fill="none"><path d="M.5.500h12v12H.5zM4.500 0v13M8.500 0v13M0 4.500h13M0 8.500h13" /></svg>
      </div>
      <svg viewBox="0 0 14 13" className="ml-[12px] h-[13px] w-[14px]" shapeRendering="crispEdges" stroke="#fff" fill="none"><path d="M.5.500h13v12H.5zM3.500 2.500h7v8h-7zM5 4.500h4M5 6.500h4M5 8.500h4" /></svg>
      <svg viewBox="0 0 14 13" className="ml-[24px] h-[13px] w-[14px]" shapeRendering="crispEdges"><path d="M.5.500h13v12H.5z" stroke="#fff" fill="none" /><path d="M3 0h3v8H3zM7 0h3v8H7zM0 0h3v1H0z" fill="#fff" /><path d="M0 8h10" stroke="#fff" /></svg>
      <div className="ml-[17px] h-[2px] w-[6px] bg-white" />
      <div className="ml-[4px] flex h-[11px] w-[100px] items-center"><div className="h-px w-[48px] bg-white" /><div className="h-[11px] w-[4px] bg-white" /><div className="h-px flex-1 bg-white" /></div>
      <svg viewBox="0 0 8 8" className="ml-[4px] h-[8px] w-[8px]" fill="#fff"><path d="M3 0h2v3h3v2H5v3H3V5H0V3h3z" /></svg>
      <T w={28} c="ml-[14px] mr-[9px]">100%</T>
    </div>
  );
}

function Task({ c, stack, active, children }: { c: string; stack?: boolean; active?: boolean; children: React.ReactNode }) {
  return (
    <div className={`flex shrink-0 ${c}`}>
      <div className={`flex h-[38px] flex-1 items-center justify-center rounded-[3px] border border-[#d5edf8] shadow-[0_0_0_1px_#1d4f6e] ${active ? "bg-gradient-to-br from-[#8cc6e0] via-[#a8d8ea] to-[#d8eef6]" : "bg-gradient-to-br from-[#a5d3e8] via-[#4f9fc6] to-[#62b4d8]"}`}>{children}</div>
      {stack && <div className="ml-px h-[38px] w-[4px] rounded-r-[3px] border border-l-0 border-[#b5dcec] bg-[#5aaed0] shadow-[1px_0_0_#1d4f6e]" />}
    </div>
  );
}

function Taskbar() {
  return (
    <div className="flex h-[40px] shrink-0 items-start border-t border-[#15262f] bg-[linear-gradient(100deg,#1d628d_0px,#1f6f9c_50px,#3a94c0_100px,#3a98c8_370px,#3aa5d0_440px,#49b2da_480px,#49b2da_600px,#349cc8_650px,#45aedb_715px,#3187bd_740px,#2d80b5_850px,#3c8fc2_890px,#3c8fc2_935px,#2c84bb_960px,#2f8cc4_1080px,#2a6f9f_1125px,#296c9b_1280px,#1c5478_1366px)] text-[12px] text-white shadow-[inset_0_1px_0_#9fc0d0]">
      <div className="w-[60px] pl-[8px] pt-px">
        <svg viewBox="0 0 38 38" className="h-[37px] w-[38px]">
          <defs>
            <radialGradient id="orb" cx=".5" cy=".95" r=".9"><stop offset="0" stopColor="#35e0fb" /><stop offset=".35" stopColor="#1779b5" /><stop offset=".7" stopColor="#123f66" /><stop offset="1" stopColor="#86b1c9" /></radialGradient>
          </defs>
          <circle cx="19" cy="19" r="17.500" fill="url(#orb)" stroke="#98c2d8" />
          <path d="M4 17a15 14 0 0 1 30 0q-15-6-30 0z" fill="#fff" opacity=".35" />
          <path d="M10 11q5-3 9-1l-2 8q-4-2-9 0z" fill="#ee5a24" /><path d="M20.500 11q5 2 9 0l-2 8q-5 2-9 0z" fill="#8fc63d" />
          <path d="M8 20q5-2 9 0l-2 8q-4-2-9 0z" fill="#4f9fe0" /><path d="M18.500 20.500q4 2 9 0l-2 8q-5 2-9 0z" fill="#fdc92b" />
        </svg>
      </div>
      <Task c="w-[58px]">
        <svg viewBox="0 0 32 32" className="ml-[3px] h-[32px] w-[32px]" fill="none">
          <path d="M17.500 13.500a6 5 0 0 1 10.500-2M25.500 20.500a6 5 0 0 1-8 1" stroke="#fff" strokeWidth="2.600" />
          <path d="M20.500 13.500a3.500 3.500 0 1 1 0 5.500M24 13q6 0 5.500 7" stroke="#fff" strokeWidth="2.200" />
          <path d="M0 4l18-3v30L0 28z" fill="#0f6cbd" /><path d="M21 21h10v10H21z" fill="#ffc800" />
          <text x="4" y="22" fontSize="17" fontWeight="700" fill="#fff" fontFamily="Open Sans, sans-serif">L</text>
        </svg>
      </Task>
      <Task c="ml-[4px] w-[59px]" stack>
        <svg viewBox="0 0 34 32" className="h-[32px] w-[34px]">
          <path d="M2 3h10l2 3h18v20H2z" fill="#e9c868" stroke="#b98f2e" strokeWidth=".7" /><path d="M4 5h8v3H4zM13 6h8v3h-8zM22 7h8v3h-8z" fill="#fff" /><path d="M5 4h3v3H5z" fill="#2fa84f" /><path d="M13 5h3v3h-3z" fill="#d8452c" /><path d="M22 6h3v3h-3z" fill="#2e86d9" />
          <path d="M1 9h31v19H1z" fill="#f8e6a0" stroke="#cfa545" strokeWidth=".7" />
          <path d="M6 31V21q0-2 2-2h18q2 0 2 2v10h-4v-6H10v6z" fill="#8fd0f2" stroke="#fff" strokeWidth=".8" />
        </svg>
      </Task>
      <Task c="ml-[2px] w-[60px]" stack>
        <svg viewBox="0 0 34 32" className="h-[32px] w-[34px]">
          <circle cx="18" cy="17" r="10" fill="none" stroke="#0f5ba8" strokeWidth="6" /><path d="M13 16h16" stroke="#0f5ba8" strokeWidth="4.500" /><path d="M22 20h9v4l-8-1z" fill="#5ea8d0" />
          <circle cx="18" cy="16" r="11.500" fill="none" stroke="#4aa8e8" strokeWidth="1" />
          <path d="M6 30C-1 26 12 6 31 1c2 0 2 3-1 7 1-4 0-5-2-4C14 9 5 22 9 29z" fill="#f6c02d" />
        </svg>
      </Task>
      <Task c="ml-[3px] w-[59px]">
        <svg viewBox="0 0 32 32" className="h-[32px] w-[32px]">
          <path d="M16 9h14v15H16z" fill="#fff" /><path d="M17 10l6 6 7-7" stroke="#0f6cbd" strokeWidth="2" fill="none" /><path d="M0 4l18-3v30L0 28z" fill="#0f6cbd" />
          <text x="3" y="22" fontSize="17" fontWeight="700" fill="#fff" fontFamily="Open Sans, sans-serif" textLength="12" lengthAdjust="spacingAndGlyphs">O</text>
        </svg>
      </Task>
      <Task c="ml-[2px] w-[59px]" stack active>
        <svg viewBox="0 0 32 32" className="h-[32px] w-[32px]">
          <path d="M16 5h14v22H16z" fill="#fff" stroke="#1e7145" /><path d="M19 9h4M25 9h3.500M19 13h4M25 13h3.500M19 17h4M25 17h3.500M19 21h4M25 21h3.500M19 24.500h4M25 24.500h3.500" stroke="#1e7145" strokeWidth="2" />
          <path d="M1 4l18-3v30L1 28z" fill="#1e7145" />
          <text x="4.500" y="22" fontSize="17" fontWeight="700" fill="#fff" fontFamily="Open Sans, sans-serif" textLength="10" lengthAdjust="spacingAndGlyphs">X</text>
        </svg>
      </Task>
      <div className="ml-auto flex h-[39px] items-center">
        <T w={13} c="mt-[-5px] mr-[17px]">PT</T>
        <svg viewBox="0 0 7 4" className="mr-[14px] mt-[2px] h-[4px] w-[7px]"><path d="M0 4h7L3.500 0z" fill="#fff" /></svg>
        <svg viewBox="0 0 15 16" className="mr-[10px] h-[16px] w-[15px]">
          <path d="M1 5h3l4-4v14l-4-4H1z" fill="#fff" stroke="#345" strokeWidth=".6" /><circle cx="10.500" cy="11" r="4.300" fill="#e03030" /><path d="M8.500 9l4 4M12.500 9l-4 4" stroke="#fff" strokeWidth="1.400" />
        </svg>
        <svg viewBox="0 0 15 16" className="mr-[17px] h-[16px] w-[15px]">
          <path d="M4.500 3.500h10v8h-10z" fill="#2a5f80" stroke="#fff" strokeWidth="1.300" /><path d="M7 14.500h6M10 12v2" stroke="#fff" strokeWidth="1.400" /><path d="M1 2h5v4H4.500v8h-2V6H1zM1.500 0v2M5.500 0v2" fill="#fff" stroke="#234" strokeWidth=".4" />
        </svg>
        <div className="flex w-[59px] flex-col items-center">
          <div className="flex h-[16px] items-center"><T w={28}>11:50</T></div>
          <div className="flex h-[16px] items-center"><T w={59}>01/10/2015</T></div>
        </div>
        <div className="ml-[12px] h-[39px] w-[14px] border border-[#14405e] bg-gradient-to-b from-[#7499b0] via-[#24597d] to-[#2f7aa8] shadow-[inset_1px_1px_0_#7fa5bb]" />
      </div>
    </div>
  );
}

export default function App() {
  return (
    <div className="flex h-[768px] w-[1366px] flex-col overflow-hidden bg-white font-['Open_Sans','Noto_Sans',sans-serif]">
      <Header />
      <Ribbon />
      <FormulaBar />
      <Sheet />
      <SheetTabs />
      <StatusBar />
      <Taskbar />
    </div>
  );
}
